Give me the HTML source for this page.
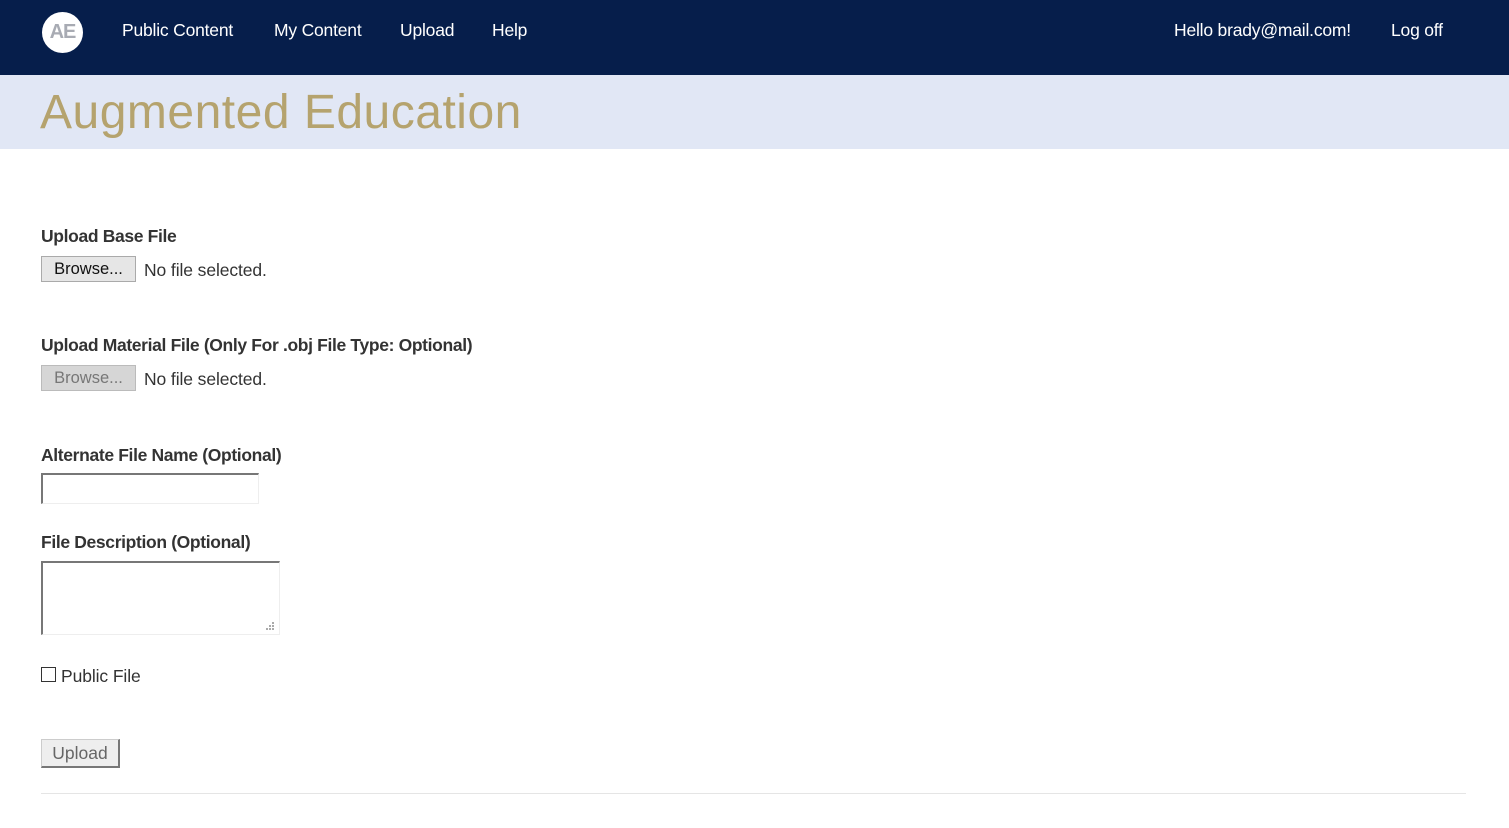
<!DOCTYPE html>
<html><head><meta charset="utf-8"><style>
body{margin:0;width:1509px;height:828px;background:#fff;font-family:"Liberation Sans",sans-serif;position:relative;overflow:hidden}
.a{position:absolute;white-space:nowrap}
.hdr{position:absolute;left:0;top:0;width:1509px;height:75px;background:#061e4b}
.ban{position:absolute;left:0;top:75px;width:1509px;height:74px;background:#e1e7f5}
.nav{color:#fff;font-size:17.5px;top:20px;letter-spacing:-0.2px}
.lbl{font-weight:bold;font-size:17.5px;color:#333;letter-spacing:-0.35px}
.btn{position:absolute;border:1px solid #aaa;background:#e6e6e6;font-size:16.5px;text-align:center;line-height:24px;box-sizing:border-box}
.nf{font-size:17.5px;color:#333;letter-spacing:-0.1px}
</style></head><body>
<div class="hdr"></div>
<div class="a" style="left:42px;top:12px;width:41px;height:41px;border-radius:50%;background:#fff;color:#a8abb3;font-weight:bold;font-size:20px;line-height:41px;text-align:center;letter-spacing:-1px">AE</div>
<div class="a nav" style="left:122px">Public Content</div>
<div class="a nav" style="left:274px">My Content</div>
<div class="a nav" style="left:400px">Upload</div>
<div class="a nav" style="left:492px">Help</div>
<div class="a nav" style="left:1174px">Hello brady@mail.com!</div>
<div class="a nav" style="left:1391px">Log off</div>
<div class="ban"></div>
<div class="a" style="left:40px;top:85px;font-size:48px;color:#b5a36e;letter-spacing:0.5px">Augmented Education</div>

<div class="a lbl" style="left:41px;top:226px">Upload Base File</div>
<div class="btn" style="left:41px;top:256px;width:95px;height:26px;color:#111">Browse...</div>
<div class="a nf" style="left:144px;top:260px">No file selected.</div>

<div class="a lbl" style="left:41px;top:335px">Upload Material File (Only For .obj File Type: Optional)</div>
<div class="btn" style="left:41px;top:365px;width:95px;height:26px;color:#777;background:#d6d6d6;border-color:#bbb">Browse...</div>
<div class="a nf" style="left:144px;top:369px">No file selected.</div>

<div class="a lbl" style="left:41px;top:445px">Alternate File Name (Optional)</div>
<div class="a" style="left:41px;top:473px;width:218px;height:31px;box-sizing:border-box;border:1px solid #eee;border-top:2px solid #777;border-left:2px solid #777"></div>

<div class="a lbl" style="left:41px;top:532px">File Description (Optional)</div>
<div class="a" style="left:41px;top:561px;width:239px;height:74px;box-sizing:border-box;border:1px solid #eee;border-top:2px solid #777;border-left:2px solid #777"></div>
<svg class="a" style="left:265px;top:621px" width="12" height="12"><g fill="#aaa"><rect x="7" y="1" width="2" height="2"/><rect x="4" y="4" width="2" height="2"/><rect x="7" y="4" width="2" height="2"/><rect x="1" y="7" width="2" height="2"/><rect x="4" y="7" width="2" height="2"/><rect x="7" y="7" width="2" height="2"/></g></svg>

<div class="a" style="left:41px;top:667px;width:15px;height:15px;box-sizing:border-box;border:1px solid #333"></div>
<div class="a nf" style="left:61px;top:666px">Public File</div>

<div class="btn" style="left:41px;top:739px;width:79px;height:29px;color:#666;background:#eee;border:1px solid #ccc;border-right:2px solid #777;border-bottom:2px solid #777;line-height:26px;font-size:17.5px">Upload</div>
<div class="a" style="left:41px;top:793px;width:1425px;height:1px;background:#e5e5e5"></div>
</body></html>
